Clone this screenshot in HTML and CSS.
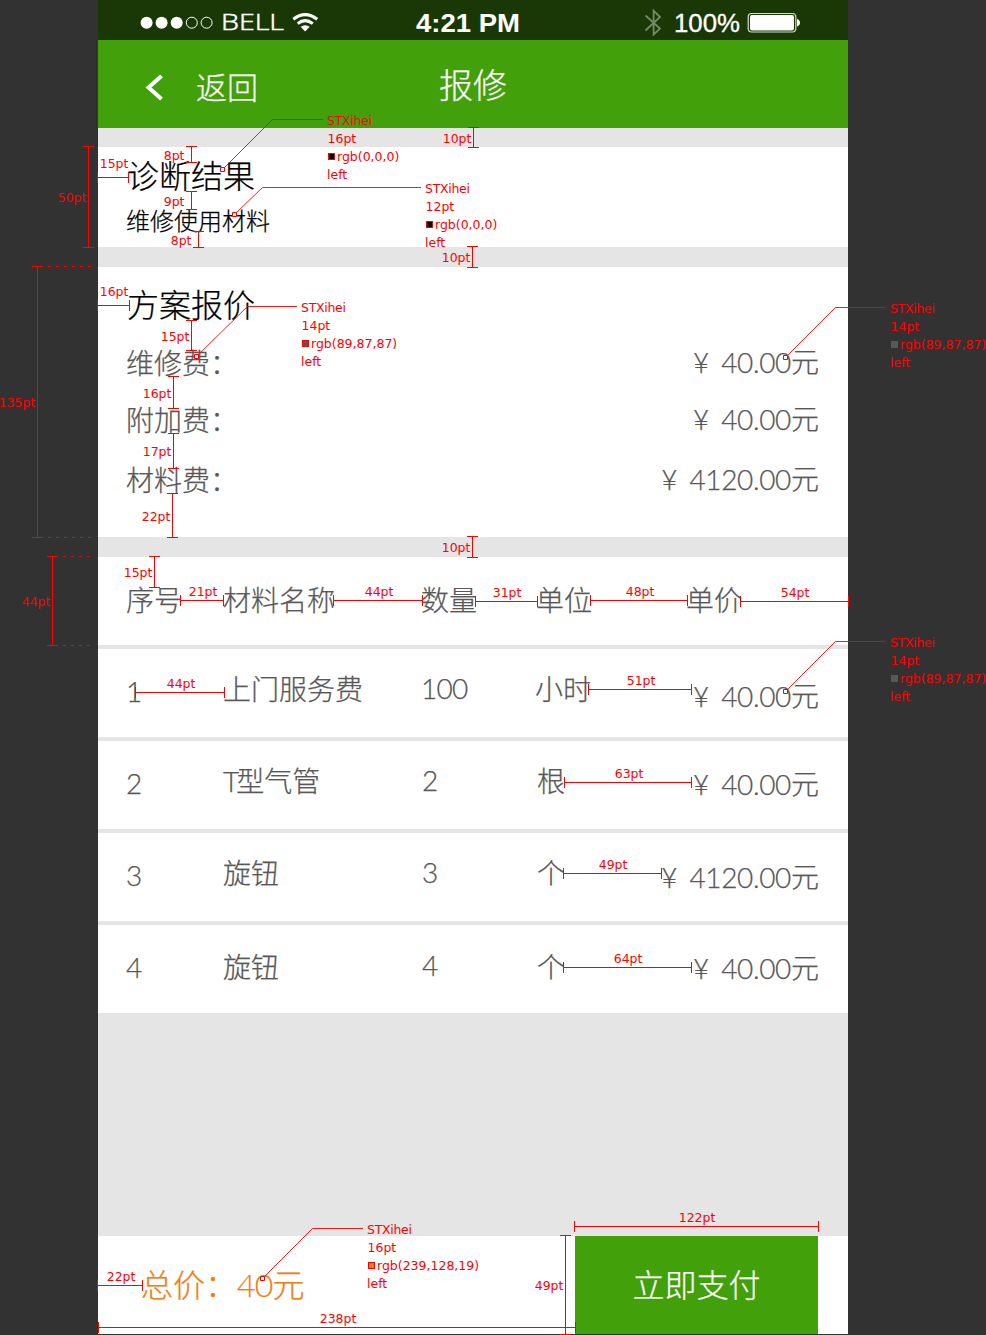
FILE: index.html
```html
<!DOCTYPE html>
<html lang="zh-CN">
<head>
<meta charset="utf-8">
<title>报修</title>
<link rel="stylesheet" href="styles.css">
</head>
<body>
<main class="phone">
  <div class="status">
    <svg width="750" height="40" viewBox="98 0 750 40">
      <g fill="#fff"><circle cx="146.600" cy="22.7" r="6"/><circle cx="161.600" cy="22.7" r="6"/><circle cx="176.700" cy="22.7" r="6"/></g>
      <g fill="none" stroke="#fff"><circle cx="191.8" cy="22.7" r="5.5"/><circle cx="206.6" cy="22.7" r="5.5"/></g>
      <text class="carrier" x="221" y="30" textLength="63" lengthAdjust="spacingAndGlyphs">BELL</text>
      <g fill="none" stroke="#fff" stroke-width="3"><path d="M293.3 19.2Q305 10 317.2 19.2"/><path d="M297.7 23.6Q305 17.6 312.8 23.6"/></g>
      <path d="M300.6 26.8Q305.1 23.7 309.7 26.8L305.1 31.4Z" fill="#fff"/>
      <text class="clock" x="416" y="32" textLength="104" lengthAdjust="spacingAndGlyphs">4:21 PM</text>
      <path d="M645.5 15.5L660 28.5L653.6 34.7V10.7L660 17L645.5 30.5" fill="none" stroke="#748968" stroke-width="1.8"/>
      <text class="battery" x="674" y="32" textLength="66" lengthAdjust="spacingAndGlyphs">100%</text>
      <rect x="748.2" y="13.5" width="47.6" height="18.5" rx="3.5" fill="none" stroke="#d5e0cf" stroke-width="1.2"/>
      <rect x="750" y="15" width="44" height="15.5" rx="2" fill="#fff"/>
      <path d="M797 19Q800 20 800 22.8T797 26.5Z" fill="#fff"/>
    </svg>
  </div>
  <header class="nav">
    <svg class="chevron" width="20" height="28" viewBox="0 0 20 28"><path d="M17.500 3L4.500 14.500L17.500 26" fill="none" stroke="#fff" stroke-width="4"/></svg>
    <span class="back">返回</span>
    <h1 class="title">报修</h1>
  </header>

  <section class="card diagnosis">
    <h2 class="heading">诊断结果</h2>
    <p class="materials">维修使用材料</p>
  </section>

  <section class="card quote">
    <h2 class="heading">方案报价</h2>
    <div class="fee repair"><span>维修费：</span><span class="money"><i>¥</i><b>40.00</b>元</span></div>
    <div class="fee extra"><span>附加费：</span><span class="money"><i>¥</i><b>40.00</b>元</span></div>
    <div class="fee parts"><span>材料费：</span><span class="money"><i>¥</i><b>4120.00</b>元</span></div>
  </section>

  <section class="table">
    <div class="row head"><span class="no">序号</span><span class="name">材料名称</span><span class="qty">数量</span><span class="unit">单位</span><span class="price">单价</span></div>
    <div class="row first"><span class="no">1</span><span class="name">上门服务费</span><span class="qty">100</span><span class="unit">小时</span><span class="money"><i>¥</i><b>40.00</b>元</span></div>
    <div class="row second"><span class="no">2</span><span class="name"><span class="latin">T</span>型气管</span><span class="qty">2</span><span class="unit">根</span><span class="money"><i>¥</i><b>40.00</b>元</span></div>
    <div class="row third"><span class="no">3</span><span class="name">旋钮</span><span class="qty">3</span><span class="unit">个</span><span class="money"><i>¥</i><b>4120.00</b>元</span></div>
    <div class="row fourth"><span class="no">4</span><span class="name">旋钮</span><span class="qty">4</span><span class="unit">个</span><span class="money"><i>¥</i><b>40.00</b>元</span></div>
  </section>

  <footer class="checkout">
    <div class="total">总价：<b>40</b>元</div>
    <button class="pay">立即支付</button>
  </footer>
</main>

<svg class="specs" width="986" height="1335" viewBox="0 0 986 1335">
  <!-- vertical dimensions -->
  <path class="dim" d="M468 127.5h11m-5.5 0v20m-5.5 0h11
    M467 246.5h11m-5.5 0v21m-5.5 0h11
    M83 146.5h11m-5.5 0v101m-5.5 0h11
    M186 146.5h11m-5.5 0v16m-5.5 0h11
    M186 191.5h11m-5.5 0v18m-5.5 0h11
    M193 231.5h11m-5.5 0v16m-5.5 0h11
    M186 320.5h11m-5.5 0v30m-5.5 0h11
    M168 376.5h11m-5.5 0v32m-5.5 0h11
    M168 433.5h11m-5.5 0v35m-5.5 0h11
    M167 493.5h11m-5.5 0v44m-5.5 0h11
    M32 266.5h11m-5.5 0v271m-5.5 0h11
    M47 556.5h11m-5.5 0v89m-5.5 0h11
    M467 536.5h11m-5.5 0v21m-5.5 0h11
    M149 556.5h11m-5.5 0v31m-5.5 0h11
    M560 1235.5h11m-5.5 0v99m-5.5 0h11"/>
  <!-- horizontal dimensions -->
  <path class="dim" d="M97.5 172v11m0-5.5h31m0-5.5v11
    M97.5 300v11m0-5.5h32m0-5.5v11
    M180.5 595v11m0-5.5h43m0-5.5v11
    M333.5 595v11m0-5.5h89m0-5.5v11
    M475.5 596v11m0-5.5h62m0-5.5v11
    M590.5 595v11m0-5.5h97m0-5.5v11
    M740.5 596v11m0-5.5h108m0-5.5v11
    M135.5 687v11m0-5.5h89m0-5.5v11
    M588.5 684v11m0-5.5h103m0-5.5v11
    M564.5 777v11m0-5.5h127m0-5.5v11
    M563.5 868v11m0-5.5h98m0-5.5v11
    M563.5 962v11m0-5.5h128m0-5.5v11
    M97.5 1280v11m0-5.5h45m0-5.5v11
    M98.5 1322v11m0-5.5h477m0-5.5v11
    M574.5 1221v11m0-5.5h244m0-5.5v11"/>
  <path class="dash" d="M48 266.5H91M48 537.5H91M63 556.5H91M63 645.5H91"/>
  <!-- leader lines and anchors -->
  <path class="lead" d="M224 168L272.5 119.5H323M236 213L262.5 187.5H421M198 355L247.5 306.5H297M787 356L835.5 307.5H886M787 690L835.5 641.5H886M264 1277L312.5 1228.5H363"/>
  <path class="anchor" d="M220.500 167.500h4v4h-4zM232.500 212.500h4v4h-4zM194.500 354.500h4v4h-4zM783.500 355.500h4v4h-4zM783.500 689.500h4v4h-4zM260.500 1276.500h4v4h-4z"/>
  <g class="labels" transform="translate(.7 0)">
    <text x="442" y="143">10pt</text><text x="441" y="262">10pt</text><text x="57" y="202">50pt</text>
    <text x="99" y="168">15pt</text><text x="163" y="160">8pt</text><text x="163" y="206">9pt</text><text x="170" y="245">8pt</text>
    <text x="99" y="296">16pt</text><text x="160" y="341">15pt</text><text x="142" y="398">16pt</text><text x="142" y="456">17pt</text><text x="141" y="521">22pt</text>
    <text x="-2" y="407">135pt</text><text x="21" y="606">44pt</text><text x="441" y="552">10pt</text><text x="123" y="577">15pt</text>
    <text x="188" y="596">21pt</text><text x="364" y="596">44pt</text><text x="492" y="597">31pt</text><text x="625" y="596">48pt</text><text x="780" y="597">54pt</text>
    <text x="166" y="688">44pt</text><text x="626" y="685">51pt</text><text x="614" y="778">63pt</text><text x="598" y="869">49pt</text><text x="613" y="963">64pt</text>
    <text x="106" y="1281">22pt</text><text x="319" y="1323">238pt</text><text x="534" y="1290">49pt</text><text x="678" y="1222">122pt</text>
  </g>
  <g class="labels">
    <text x="327" y="125" textLength="45">STXihei</text><text x="327.500" y="143">16pt</text><text x="337" y="161">rgb(0,0,0)</text><text x="327" y="179">left</text>
    <text x="425" y="193" textLength="45">STXihei</text><text x="425.500" y="211">12pt</text><text x="435" y="229">rgb(0,0,0)</text><text x="425" y="247">left</text>
    <text x="301" y="312" textLength="45">STXihei</text><text x="301.500" y="330">14pt</text><text x="311" y="348">rgb(89,87,87)</text><text x="301" y="366">left</text>
    <text x="890" y="313" textLength="45">STXihei</text><text x="890.500" y="331">14pt</text><text x="900" y="349">rgb(89,87,87)</text><text x="890" y="367">left</text>
    <text x="890" y="647" textLength="45">STXihei</text><text x="890.500" y="665">14pt</text><text x="900" y="683">rgb(89,87,87)</text><text x="890" y="701">left</text>
    <text x="367" y="1234" textLength="45">STXihei</text><text x="367.500" y="1252">16pt</text><text x="377" y="1270">rgb(239,128,19)</text><text x="367" y="1288">left</text>
  </g>
  <g class="swatch">
    <rect x="328.500" y="153.500" width="6" height="6" fill="#000"/><rect x="426.500" y="221.500" width="6" height="6" fill="#000"/>
    <rect x="302.500" y="340.500" width="6" height="6" fill="#595757"/><rect class="dim-edge" x="891.500" y="341.500" width="6" height="6" fill="#595757"/>
    <rect class="dim-edge" x="891.500" y="675.500" width="6" height="6" fill="#595757"/><rect x="368.500" y="1262.500" width="6" height="6" fill="#ef8013"/>
  </g>
</svg>
</body>
</html>
```

FILE: styles.css
```css
* { box-sizing: border-box; }
body {
  position: relative;
  width: 986px;
  height: 1335px;
  margin: 0;
  overflow: hidden;
  background: #323232;
  font-family: Lato, "Noto Sans CJK SC", sans-serif;
  font-weight: 300;
}
h1, h2, p { margin: 0; font-weight: 300; }

.phone {
  display: flex;
  flex-direction: column;
  width: 750px;
  height: 1334px;
  margin-left: 98px;
  background: #e5e5e5;
  color: #595757;
  font-size: 28px;
  line-height: 28px;
  -webkit-text-stroke: .25px currentColor;
}

.status { height: 40px; background: #193805; -webkit-text-stroke: 0; }
.status svg { display: block; }
.status text { fill: #fff; font-family: "Liberation Sans", sans-serif; font-weight: 400; }
.status .carrier { font-family: "Open Sans", sans-serif; font-size: 22.5px; font-weight: 300; stroke: #fff; stroke-width: .5px; }
.status .clock { font-size: 25px; font-weight: 700; }
.status .battery { font-size: 25px; stroke: #fff; stroke-width: .3px; }

.nav {
  display: flex;
  align-items: flex-start;
  height: 88px;
  padding-left: 46px;
  background: #42a00b;
  color: #fff;
}
.chevron { margin-top: 33px; }
.back { margin: 31px 0 0 32px; font-size: 31px; line-height: 32px; }
.title { margin: 28px 0 0 181px; font-size: 34px; line-height: 34px; }

.card { background: #fff; padding: 0 29px 0 28px; }
.heading { color: #000; font-size: 32px; line-height: 32px; padding-left: 1px; }
.diagnosis { height: 100px; margin-top: 19px; padding-top: 13px; }
.materials { margin-top: 17px; color: #000; font-size: 24px; line-height: 24px; }

.quote { height: 270px; margin-top: 20px; padding-top: 22px; }
.fee { display: flex; justify-content: space-between; }
.repair { margin-top: 28px; }
.extra { margin-top: 29px; }
.parts { margin-top: 32px; }
.fee .money { margin-top: -1px; }

.money { display: flex; justify-content: flex-end; white-space: nowrap; }
.money i { font-style: normal; }
.money b { margin-left: 12px; font-weight: 300; letter-spacing: -.35px; }

.table { display: grid; grid-auto-rows: 88px; row-gap: 4px; margin-top: 20px; }
.row {
  display: grid;
  grid-template-columns: 97px 198px 115px 109px 174px;
  align-items: start;
  padding: 26px 29px 0 28px;
  background: #fff;
}
.head { padding-top: 29px; grid-template-columns: 97px 198px 115px 150px 1fr; }
.row .no { margin-top: 2px; }
.head .no { margin-top: 0; }
.row .qty { margin: -1px 0 0 1px; letter-spacing: -.7px; }
.head .qty { margin: 0; letter-spacing: 0; }
.first .unit { margin-left: -1px; }
.second .unit, .third .unit, .fourth .unit { margin-left: 1px; }
.first .qty { margin-left: 0; }
.latin { letter-spacing: -3px; }
.first .money { margin-top: 7px; }
.second .money { margin-top: 3px; }
.third .money { margin-top: 4px; }
.fourth { padding-top: 28px; }
.fourth .no { margin-top: 0; }
.fourth .qty { margin-top: -2px; }
.fourth .money { margin-top: 1px; }

.checkout {
  display: flex;
  justify-content: space-between;
  height: 98px;
  margin-top: auto;
  padding: 0 30px 0 43px;
  background: #fff;
  font-size: 32px;
}
.total { padding-top: 33px; color: #ef8013; line-height: 32px; }
.total b { font-weight: 300; letter-spacing: -.8px; }
.pay {
  width: 243px;
  padding: 0;
  border: 0;
  background: #42a00b;
  color: #fff;
  font: inherit;
}

.specs { position: absolute; left: 0; top: 0; }
.dim, .dash { fill: none; stroke: #f00; shape-rendering: crispEdges; }
.dash { stroke-dasharray: 3 5; }
.lead { fill: none; stroke: #f00; stroke-width: .9; }
.anchor { fill: #fff; stroke: #f00; }
.labels { fill: #f00; font-family: "DejaVu Sans", sans-serif; font-size: 12.5px; font-weight: 400; }
.swatch rect { stroke: #f00; }
.swatch .dim-edge { stroke: #654; }
```
